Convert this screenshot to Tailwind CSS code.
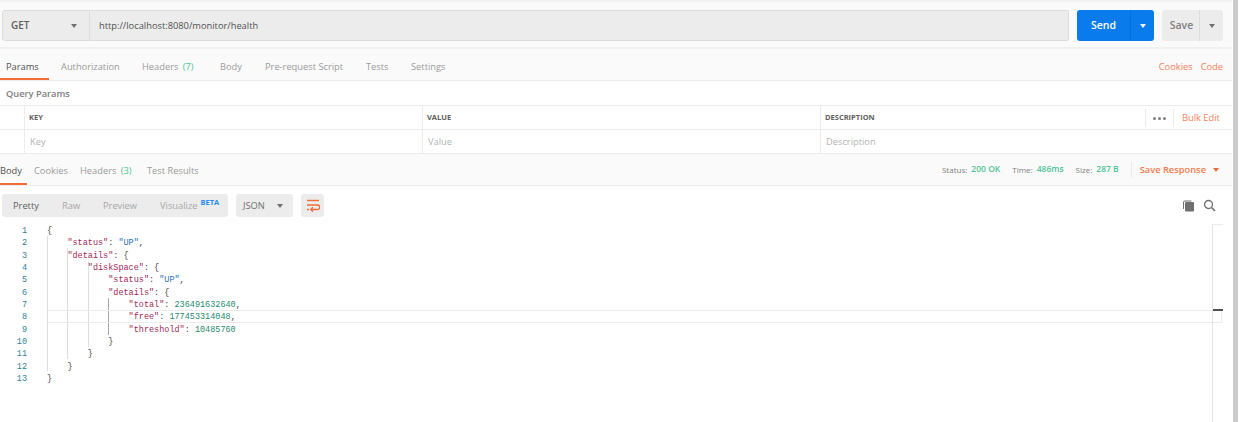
<!DOCTYPE html>
<html lang="en">

<head>
    <meta charset="UTF-8" />
    <title>Postman</title>
    <script src="https://cdn.jsdelivr.net/npm/@tailwindcss/browser@4"></script>
</head>

<body class="bg-white font-['Open_Sans',sans-serif] text-[9.3px] text-[#505050] h-[422px] w-[1240px] overflow-hidden flex">
    <div class="w-[1232px] shrink-0 flex flex-col h-full">
        <!-- url bar -->
        <div class="h-[49px] bg-[#fafafa] border-t-2 border-b-2 border-t-[#f3f3f3] border-b-[#f0f0f0] pt-2 pl-0.5 flex shrink-0">
            <div class="w-[88px] h-[31px] bg-[#ececec] border border-[#dcdcdc] rounded-l-[3px] flex items-center pl-2 pr-3 justify-between text-[10px] font-semibold text-[#606060]">
                <span>GET</span>
                <span class="w-0 h-0 border-x-[3.5px] border-x-transparent border-t-[4px] border-t-[#707070]"></span>
            </div>
            <div class="w-[979px] h-[31px] bg-[#ececec] border border-l-0 border-[#dcdcdc] rounded-r-[2px] flex items-center pl-[9px] text-[#505050]">http://localhost:8080/monitor/health</div>
            <div class="ml-2 w-[77px] h-[31px] bg-[#097bed] rounded-[3px] flex text-white font-semibold text-[10.5px]">
                <div class="w-[53px] flex items-center justify-center">Send</div>
                <div class="flex-1 border-l border-[#0a6fd4] flex items-center justify-center">
                    <span class="w-0 h-0 border-x-[3.5px] border-x-transparent border-t-[4px] border-t-white"></span>
                </div>
            </div>
            <div class="ml-2 w-[61px] h-[31px] bg-[#ececec] rounded-[3px] flex text-[#808080] font-semibold text-[10.5px]">
                <div class="w-[37px] flex items-center justify-center pl-0.5">Save</div>
                <div class="flex-1 border-l border-[#dcdcdc] flex items-center justify-center">
                    <span class="w-0 h-0 border-x-[3.5px] border-x-transparent border-t-[4px] border-t-[#707070]"></span>
                </div>
            </div>
        </div>

        <!-- request tabs -->
        <div class="h-[32px] bg-[#fafafa] border-b border-[#ececec] pt-[5px] flex items-center relative shrink-0 text-[#9a9a9a]">
            <span class="ml-[6px] w-[55px] text-[#505050]">Params</span>
            <span class="w-[81px]">Authorization</span>
            <span class="w-[78px]">Headers <span class="text-[#4fc497] ml-0.5">(7)</span></span>
            <span class="w-[45px]">Body</span>
            <span class="w-[101px]">Pre-request Script</span>
            <span class="w-[45px]">Tests</span>
            <span>Settings</span>
            <span class="absolute left-0 bottom-0 w-[49px] h-[2px] bg-[#f26b3a]"></span>
            <span class="ml-auto text-[#f4815a]">Cookies</span>
            <span class="ml-[8px] mr-[9px] text-[#f4815a]">Code</span>
        </div>

        <!-- query params -->
        <div class="h-[25px] flex items-center pl-1.5 pt-px border-b border-[#ececec] font-semibold text-[9.3px] text-[#808080] shrink-0">Query Params</div>
        <div class="h-[24px] flex border-b border-[#ececec] shrink-0 text-[7.5px] font-bold text-[#606060]">
            <div class="w-[25px] border-r border-[#ececec]"></div>
            <div class="w-[398px] border-r border-[#ececec] flex items-center pl-[4px]">KEY</div>
            <div class="w-[398px] border-r border-[#ececec] flex items-center pl-[4px]">VALUE</div>
            <div class="flex-1 flex items-center pl-[4px] relative">
                DESCRIPTION
                <div class="absolute right-0 top-[3px] h-[18px] w-[87px] flex items-center">
                    <div class="w-[29px] h-full border-x border-[#ececec] flex items-center justify-center gap-[2px]">
                        <span class="w-[3px] h-[3px] rounded-full bg-[#808080]"></span>
                        <span class="w-[3px] h-[3px] rounded-full bg-[#808080]"></span>
                        <span class="w-[3px] h-[3px] rounded-full bg-[#808080]"></span>
                    </div>
                    <span class="ml-[8px] text-[9.3px] font-normal text-[#f4815a]">Bulk Edit</span>
                </div>
            </div>
        </div>
        <div class="h-[24px] flex border-b border-[#ececec] shrink-0 text-[#b4b4b4]">
            <div class="w-[25px] border-r border-[#ececec]"></div>
            <div class="w-[398px] border-r border-[#ececec] flex items-center pl-[5px]">Key</div>
            <div class="w-[398px] border-r border-[#ececec] flex items-center pl-[5px]">Value</div>
            <div class="flex-1 flex items-center pl-[5px]">Description</div>
        </div>

        <!-- response tabs -->
        <div class="h-[32px] bg-[#fafafa] border-b border-[#ececec] pt-[3px] flex items-center relative shrink-0 text-[#9a9a9a]">
            <span class="w-[34px] text-[#505050]">Body</span>
            <span class="w-[46px]">Cookies</span>
            <span class="w-[67px]">Headers <span class="text-[#4fc497] ml-0.5">(3)</span></span>
            <span>Test Results</span>
            <span class="absolute left-0 bottom-0 w-[27px] h-[2px] bg-[#f26b3a]"></span>
            <div class="ml-auto -mt-[3px] flex items-center text-[8px] text-[#808080]">
                <span>Status:</span>
                <span class="ml-1 text-[8.5px] font-semibold text-[#4fc497]">200 OK</span>
                <span class="ml-3">Time:</span>
                <span class="ml-1 text-[8.5px] font-semibold text-[#4fc497]">486ms</span>
                <span class="ml-3">Size:</span>
                <span class="ml-1 text-[8.5px] font-semibold text-[#4fc497]">287 B</span>
                <span class="w-px h-[16px] bg-[#ececec] ml-3"></span>
                <span class="ml-2 text-[9.3px] font-semibold text-[#f47a4d]">Save Response</span>
                <span class="ml-[7px] mr-[13px] w-0 h-0 border-x-[3.5px] border-x-transparent border-t-[4px] border-t-[#f26b3a]"></span>
            </div>
        </div>

        <!-- response toolbar -->
        <div class="h-[38px] pt-px flex items-center pl-0.5 shrink-0 text-[#a8a8a8]">
            <div class="w-[226px] h-[23px] bg-[#ececec] rounded-[3px] flex items-center">
                <span class="ml-[11px] w-[49px] text-[#606060]">Pretty</span>
                <span class="w-[41px]">Raw</span>
                <span class="w-[57px]">Preview</span>
                <span>Visualize</span>
                <span class="ml-[3px] -mt-[5px] text-[7.5px] font-bold text-[#2a8cef]">BETA</span>
            </div>
            <div class="ml-2 w-[57px] h-[23px] bg-[#ececec] rounded-[3px] flex items-center justify-between pl-[7px] pr-[10px] text-[#707070]">
                <span>JSON</span>
                <span class="w-0 h-0 border-x-[3.5px] border-x-transparent border-t-[4px] border-t-[#707070]"></span>
            </div>
            <div class="ml-2 w-[23px] h-[23px] bg-[#ececec] rounded-[3px] flex items-center justify-center">
                <svg width="14" height="13" viewBox="0 0 14 13" fill="none" stroke="#f26b3a" stroke-width="1.4">
                    <path d="M1 1.5h12" />
                    <path d="M1 6h10.5a1.8 1.8 0 0 1 0 4.5H5" />
                    <path d="M1 10.5h2" />
                    <path d="M7 8.3 4.8 10.5 7 12.7" />
                </svg>
            </div>
            <div class="ml-auto mr-[16px] flex items-center gap-[8px]">
                <svg width="13" height="13" viewBox="0 0 13 13" fill="#6f6f6f">
                    <path d="M3 1.5h6.5v1H3a1 1 0 0 0-1 1V10H1V3.5a2 2 0 0 1 2-2Z" />
                    <rect x="3" y="3" width="9" height="9.5" rx="1" />
                </svg>
                <svg width="13" height="13" viewBox="0 0 13 13" fill="none" stroke="#6f6f6f" stroke-width="1.3">
                    <circle cx="5.5" cy="5.5" r="4" />
                    <path d="M8.5 8.5 12 12" stroke-width="1.6" />
                </svg>
            </div>
        </div>

        <!-- response body -->
        <div class="flex-1 flex relative font-['Liberation_Mono',monospace] text-[8.5px] leading-[12.33px] pt-px">
            <div class="w-[27px] text-right text-[#2f7f9e] shrink-0">
                <div>1</div><div>2</div><div>3</div><div>4</div><div>5</div><div>6</div><div>7</div><div>8</div><div>9</div><div>10</div><div>11</div><div>12</div><div>13</div>
            </div>
            <div class="ml-[20px] relative z-10 text-[#444] whitespace-nowrap">
                <div>{</div>
                <div class="pl-[20.4px]"><span class="text-[#a3285a]">"status"</span>: <span class="text-[#2a6fb0]">"UP"</span>,</div>
                <div class="pl-[20.4px]"><span class="text-[#a3285a]">"details"</span>: {</div>
                <div class="pl-[40.8px]"><span class="text-[#a3285a]">"diskSpace"</span>: {</div>
                <div class="pl-[61.2px]"><span class="text-[#a3285a]">"status"</span>: <span class="text-[#2a6fb0]">"UP"</span>,</div>
                <div class="pl-[61.2px]"><span class="text-[#a3285a]">"details"</span>: {</div>
                <div class="pl-[81.6px]"><span class="text-[#a3285a]">"total"</span>: <span class="text-[#1f8a70]">236491632640</span>,</div>
                <div class="pl-[81.6px]"><span class="text-[#a3285a]">"free"</span>: <span class="text-[#1f8a70]">177453314048</span>,</div>
                <div class="pl-[81.6px]"><span class="text-[#a3285a]">"threshold"</span>: <span class="text-[#1f8a70]">10485760</span></div>
                <div class="pl-[61.2px]">}</div>
                <div class="pl-[40.8px]">}</div>
                <div class="pl-[20.4px]">}</div>
                <div>}</div>
            </div>
            <!-- editor overlays: indent guides, current line, ruler -->
            <span class="absolute left-[47px] top-[12px] h-[135px] w-px bg-[#dedede]"></span>
            <span class="absolute left-[67px] top-[24px] h-[111px] w-px bg-[#dedede]"></span>
            <span class="absolute left-[88px] top-[37px] h-[86px] w-px bg-[#dedede]"></span>
            <span class="absolute left-[108px] top-[74px] h-[37px] w-px bg-[#a8a8a8]"></span>
            <span class="absolute left-[48px] top-[86px] h-[13px] w-[1174px] border-y border-r border-[#ececec]"></span>
            <span class="absolute left-[1212px] top-0 bottom-0 w-[11px] border-l border-[#e4e4e4]">
                <span class="block h-px w-full bg-[#ececec]"></span>
                <span class="absolute left-0 top-[85px] h-[2px] w-full bg-[#505050]"></span>
            </span>
        </div>
    </div>
    <div class="ml-px w-[5px] h-full bg-[#cbcbcb] shrink-0"></div>
</body>

</html>
